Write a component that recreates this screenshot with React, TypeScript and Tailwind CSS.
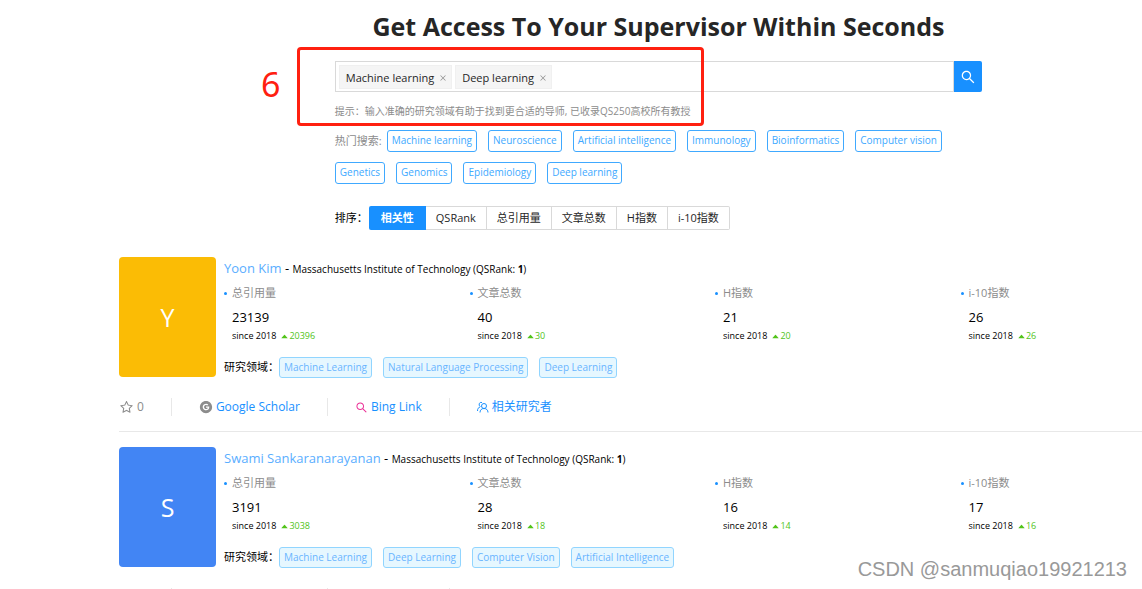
import {
    AiFillCaretUp,
    AiFillGoogleCircle,
    AiOutlineClose,
    AiOutlineSearch,
    AiOutlineStar,
} from "react-icons/ai";

type Stat = { label: string; total: number; recent: number };

type Scholar = {
    name: string;
    school: string;
    rank: number;
    avatar: string;
    stats: Stat[];
    fields: string[];
};

const SELECTED = ["Machine learning", "Deep learning"];

const HOT = [
    "Machine learning",
    "Neuroscience",
    "Artificial intelligence",
    "Immunology",
    "Bioinformatics",
    "Computer vision",
    "Genetics",
    "Genomics",
    "Epidemiology",
    "Deep learning",
];

const SORTS = ["相关性", "QSRank", "总引用量", "文章总数", "H指数", "i-10指数"];

const SCHOLARS: Scholar[] = [
    {
        name: "Yoon Kim",
        school: "Massachusetts Institute of Technology",
        rank: 1,
        avatar: "bg-[#fbbc05]",
        stats: [
            { label: "总引用量", total: 23139, recent: 20396 },
            { label: "文章总数", total: 40, recent: 30 },
            { label: "H指数", total: 21, recent: 20 },
            { label: "i-10指数", total: 26, recent: 26 },
        ],
        fields: ["Machine Learning", "Natural Language Processing", "Deep Learning"],
    },
    {
        name: "Swami Sankaranarayanan",
        school: "Massachusetts Institute of Technology",
        rank: 1,
        avatar: "bg-[#4285f4]",
        stats: [
            { label: "总引用量", total: 3191, recent: 3038 },
            { label: "文章总数", total: 28, recent: 18 },
            { label: "H指数", total: 16, recent: 14 },
            { label: "i-10指数", total: 17, recent: 16 },
        ],
        fields: ["Machine Learning", "Deep Learning", "Computer Vision", "Artificial Intelligence"],
    },
];

export default function App() {
    return (
        <div className="relative h-screen overflow-hidden bg-white font-['Open_Sans','Noto_Sans_CJK_SC',sans-serif] text-[11px] text-black">
            <main className="-mr-14 pl-[119px]">
                <SearchPanel />
                <ul className="mt-3">
                    {SCHOLARS.map((s) => (
                        <ScholarItem key={s.name} scholar={s} />
                    ))}
                </ul>
            </main>

            {/* marca del paso */}
            <div className="pointer-events-none absolute left-[297px] top-[47px] h-[79px] w-[407px] rounded border-3 border-[#ff2010]" />
            <span className="absolute left-[261px] top-[64px] font-['Noto_Sans'] text-[34px] leading-[40px] text-[#ff2010]">
                6
            </span>
            <span className="absolute bottom-[8px] right-[15px] font-['Liberation_Sans'] text-[20px] leading-6 text-[#999999]">
                CSDN @sanmuqiao19921213
            </span>
        </div>
    );
}

function SearchPanel() {
    return (
        <header className="mx-auto w-3/5">
            <h1 className="pt-[7px] text-center text-[25px] font-bold leading-[38px] whitespace-nowrap text-[#262626]">
                Get Access To Your Supervisor Within Seconds
            </h1>

            <form className="mt-4 flex h-[31px]" onSubmit={(e) => e.preventDefault()}>
                <div className="flex flex-1 items-center gap-[3px] border border-[#d9d9d9] px-[3px] pt-px">
                    {SELECTED.map((s) => (
                        <span
                            key={s}
                            className="flex h-6 shrink-0 items-center gap-[5px] border border-[#f0f0f0] bg-[#f5f5f5] pl-1.5 pr-1 pt-0.5 text-[11px] text-[#262626]"
                        >
                            {s}
                            <button type="button" aria-label={`Remove ${s}`} className="text-[8px] text-[#8c8c8c]">
                                <AiOutlineClose />
                            </button>
                        </span>
                    ))}
                    <input aria-label="研究领域" className="min-w-0 flex-1 outline-none" />
                </div>
                <button
                    type="submit"
                    aria-label="搜索"
                    className="grid w-7 place-items-center rounded-r-xs bg-[#1890ff] text-[16px] text-white"
                >
                    <AiOutlineSearch />
                </button>
            </form>

            <p className="mt-[11px] text-[10px] leading-4 text-[#8c8c8c]">
                提示：输入准确的研究领域有助于找到更合适的导师, 已收录QS250高校所有教授
            </p>

            <div className="mt-[11px] flex flex-wrap items-center gap-x-[11px] gap-y-[10px]">
                <span className="-mr-1.5 text-[#8c8c8c]">热门搜索:</span>
                {HOT.map((h) => (
                    <button
                        key={h}
                        type="button"
                        className="h-[22px] rounded-[3px] border border-[#40a9ff] px-1 pb-0.5 text-[10px] text-[#40a9ff]"
                    >
                        {h}
                    </button>
                ))}
            </div>

            <div className="mt-[22px] flex h-6 items-center">
                <span className="mr-px">排序：</span>
                {SORTS.map((s, i) => (
                    <button
                        key={s}
                        type="button"
                        aria-pressed={i === 0}
                        className={
                            i === 0
                                ? "h-full rounded-l-xs bg-[#1890ff] px-3 font-bold text-white"
                                : "h-full border border-l-0 border-[#d9d9d9] px-[10px] text-[#262626] last:rounded-r-xs"
                        }
                    >
                        {s}
                    </button>
                ))}
            </div>
        </header>
    );
}

function ScholarItem({ scholar }: { scholar: Scholar }) {
    return (
        <li className="border-b border-[#e8e8e8] pb-[14px] pt-[15px]">
            <div className="-mr-2 flex gap-2">
                <div
                    className={`grid h-[120px] w-[97px] shrink-0 place-items-center rounded pt-0.5 text-[25px] text-white ${scholar.avatar}`}
                >
                    {scholar.name[0]}
                </div>

                <div className="flex-1">
                    <h2 className="text-[10px] leading-[22px]">
                        <a href="#" className="text-[13px] text-[#5aaeff]">
                            {scholar.name}
                        </a>
                        <span className="text-[13px]"> - </span>
                        {scholar.school} (QSRank: <b>{scholar.rank}</b>)
                    </h2>

                    <dl className="mt-[3px] grid grid-cols-4">
                        {scholar.stats.map((st) => (
                            <div key={st.label}>
                                <dt className="flex items-center gap-[5px] leading-5 text-[#8c8c8c]">
                                    <i className="h-[3px] w-[3px] rounded-full bg-[#1890ff]" />
                                    {st.label}
                                </dt>
                                <dd className="pl-2 text-[13px] leading-7">{st.total}</dd>
                                <dd className="flex items-center pl-2 text-[9px] leading-[10px]">
                                    since 2018
                                    <AiFillCaretUp className="ml-1 text-[#52c41a]" />
                                    <span className="text-[#52c41a]">{st.recent}</span>
                                </dd>
                            </div>
                        ))}
                    </dl>

                    <div className="mt-4 flex h-[21px] items-center gap-[11px]">
                        <span className="-mr-[11px]">研究领域：</span>
                        {scholar.fields.map((f) => (
                            <a
                                key={f}
                                href="#"
                                className="rounded-[3px] border border-[#91d5ff] bg-[#e6f7ff] px-1 text-[10px] leading-[19px] text-[#69b5ff]"
                            >
                                {f}
                            </a>
                        ))}
                    </div>
                </div>
            </div>

            <div className="mt-[19px] flex h-5 items-center text-[12px] text-[#1890ff]">
                <button type="button" className="flex items-center gap-[3px] text-[#8c8c8c]">
                    <AiOutlineStar className="text-[15px]" />0
                </button>
                <Divider />
                <a href="#" className="flex items-center gap-[3px]">
                    <AiFillGoogleCircle className="text-[14px] text-[#8c8c8c]" />
                    Google Scholar
                </a>
                <Divider />
                <a href="#" className="flex items-center gap-[3px]">
                    <AiOutlineSearch className="text-[13px] text-[#eb2f96]" />
                    Bing Link
                </a>
                <Divider />
                <a href="#" className="flex items-center gap-[3px]">
                    <PeopleIcon />
                    相关研究者
                </a>
            </div>
        </li>
    );
}

function Divider() {
    return <span className="mx-[27px] h-[18px] w-px bg-[#e8e8e8]" />;
}

function PeopleIcon() {
    return (
        <svg width="12" height="12" viewBox="0 0 24 24" fill="none" stroke="currentColor" strokeWidth="2">
            <circle cx="14" cy="10" r="5" />
            <path d="M6 23c0-5 3-8 8-8s8 3 8 8M10 3a4 4 0 1 0-3 8M1 20c0-5 2-7 5-8" />
        </svg>
    );
}
